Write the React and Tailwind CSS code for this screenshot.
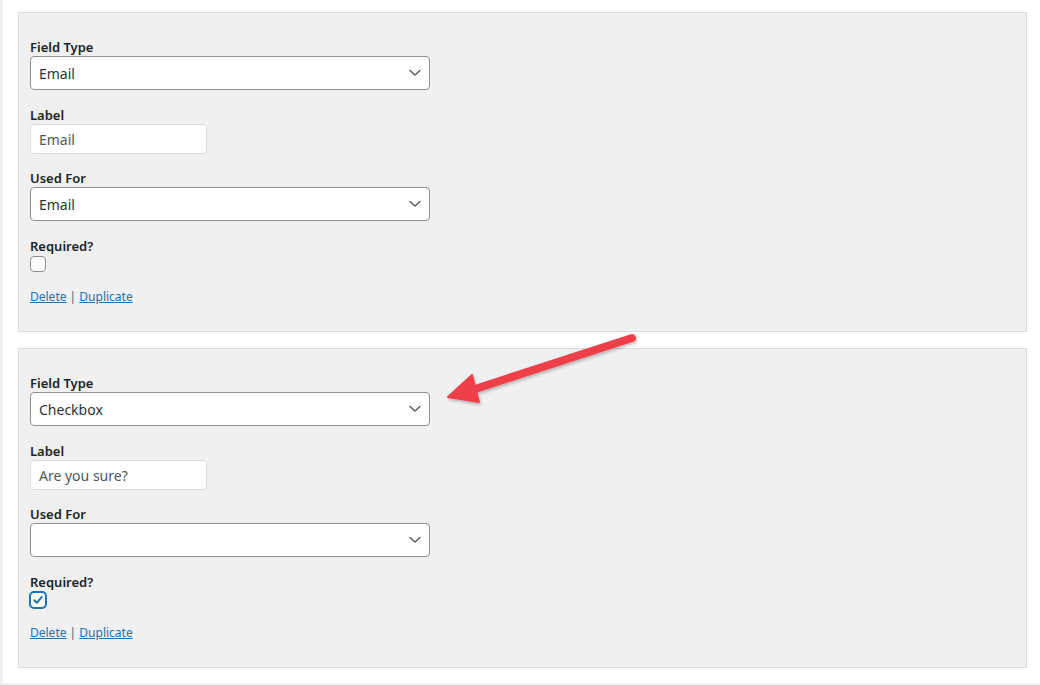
import React from "react";

const font = { fontFamily: '"Noto Sans", "Open Sans", sans-serif' };

function Chevron() {
  return (
    <svg width="12" height="7" viewBox="0 0 12 7" className="absolute right-[8px] top-1/2 -translate-y-1/2">
      <path d="M1 1 L6 5.5 L11 1" fill="none" stroke="#50575e" strokeWidth="1.4" strokeLinecap="round" strokeLinejoin="round" />
    </svg>
  );
}

function Select({ value }) {
  return (
    <div className="relative w-[400px] h-[34px] bg-white border border-[#8c8f94] rounded-[4px] flex items-center pl-[8px] text-[14px] text-[#2c3338]">
      <span>{value}</span>
      <Chevron />
    </div>
  );
}

function Label({ children }) {
  return <div className="text-[13px] leading-[18px] font-semibold text-[#1d2327]">{children}</div>;
}

function Checkbox({ checked }) {
  if (checked) {
    return (
      <div className="mt-[1px] w-[16px] h-[16px] rounded-[4px] border border-[#2271b1] ring-1 ring-[#2271b1] bg-white flex items-center justify-center">
        <svg width="12" height="12" viewBox="0 0 12 12">
          <path d="M2.2 6.2 L4.8 8.8 L9.8 2.8" fill="none" stroke="#2271b1" strokeWidth="2" strokeLinecap="round" strokeLinejoin="round" />
        </svg>
      </div>
    );
  }
  return <div className="mt-[1px] w-[16px] h-[16px] rounded-[4px] border border-[#8c8f94] bg-white" />;
}

function Panel({ type, label, usedFor, checked }) {
  return (
    <div className="w-[1009px] bg-[#f0f0f1] border border-[#dcdcde] pl-[11px] pt-[25px] pb-[25px]">
      <Label>Field Type</Label>
      <Select value={type} />
      <div className="mt-[16px]">
        <Label>Label</Label>
        <div className="w-[177px] h-[30px] bg-white border border-[#dcdcde] rounded-[4px] flex items-center pl-[8px] text-[14px] text-[#50575e]">
          {label}
        </div>
      </div>
      <div className="mt-[15px]">
        <Label>Used For</Label>
        <Select value={usedFor} />
      </div>
      <div className="mt-[16px]">
        <Label>Required?</Label>
        <Checkbox checked={checked} />
      </div>
      <div className="mt-[16px] text-[12px] leading-[18px] text-[#50575e]">
        <a className="text-[#2271b1] underline">Delete</a> | <a className="text-[#2271b1] underline">Duplicate</a>
      </div>
    </div>
  );
}

export default function App() {
  return (
    <div className="w-[1040px] h-[685px] bg-[#f0f0f1] pl-[3px] overflow-hidden" style={font}>
      <div className="relative h-[683px] bg-white pl-[15px] pt-[12px] flex flex-col gap-[16px]">
        <Panel type="Email" label="Email" usedFor="Email" checked={false} />
        <Panel type="Checkbox" label="Are you sure?" usedFor="" checked={true} />
        <svg className="absolute left-0 top-0 pointer-events-none" width="1040" height="685" viewBox="0 0 1040 685" style={{ left: -3 }}>
          <defs>
            <filter id="sh" x="-20%" y="-20%" width="140%" height="160%">
              <feDropShadow dx="1" dy="2" stdDeviation="1.5" floodColor="#000" floodOpacity="0.25" />
            </filter>
          </defs>
          <g filter="url(#sh)">
            <line x1="632" y1="338" x2="472" y2="390" stroke="#ef3f49" strokeWidth="8" strokeLinecap="round" />
            <polygon points="448,397 472,375 479,402" fill="#ef3f49" stroke="#ef3f49" strokeWidth="2" strokeLinejoin="round" />
          </g>
        </svg>
      </div>
    </div>
  );
}
